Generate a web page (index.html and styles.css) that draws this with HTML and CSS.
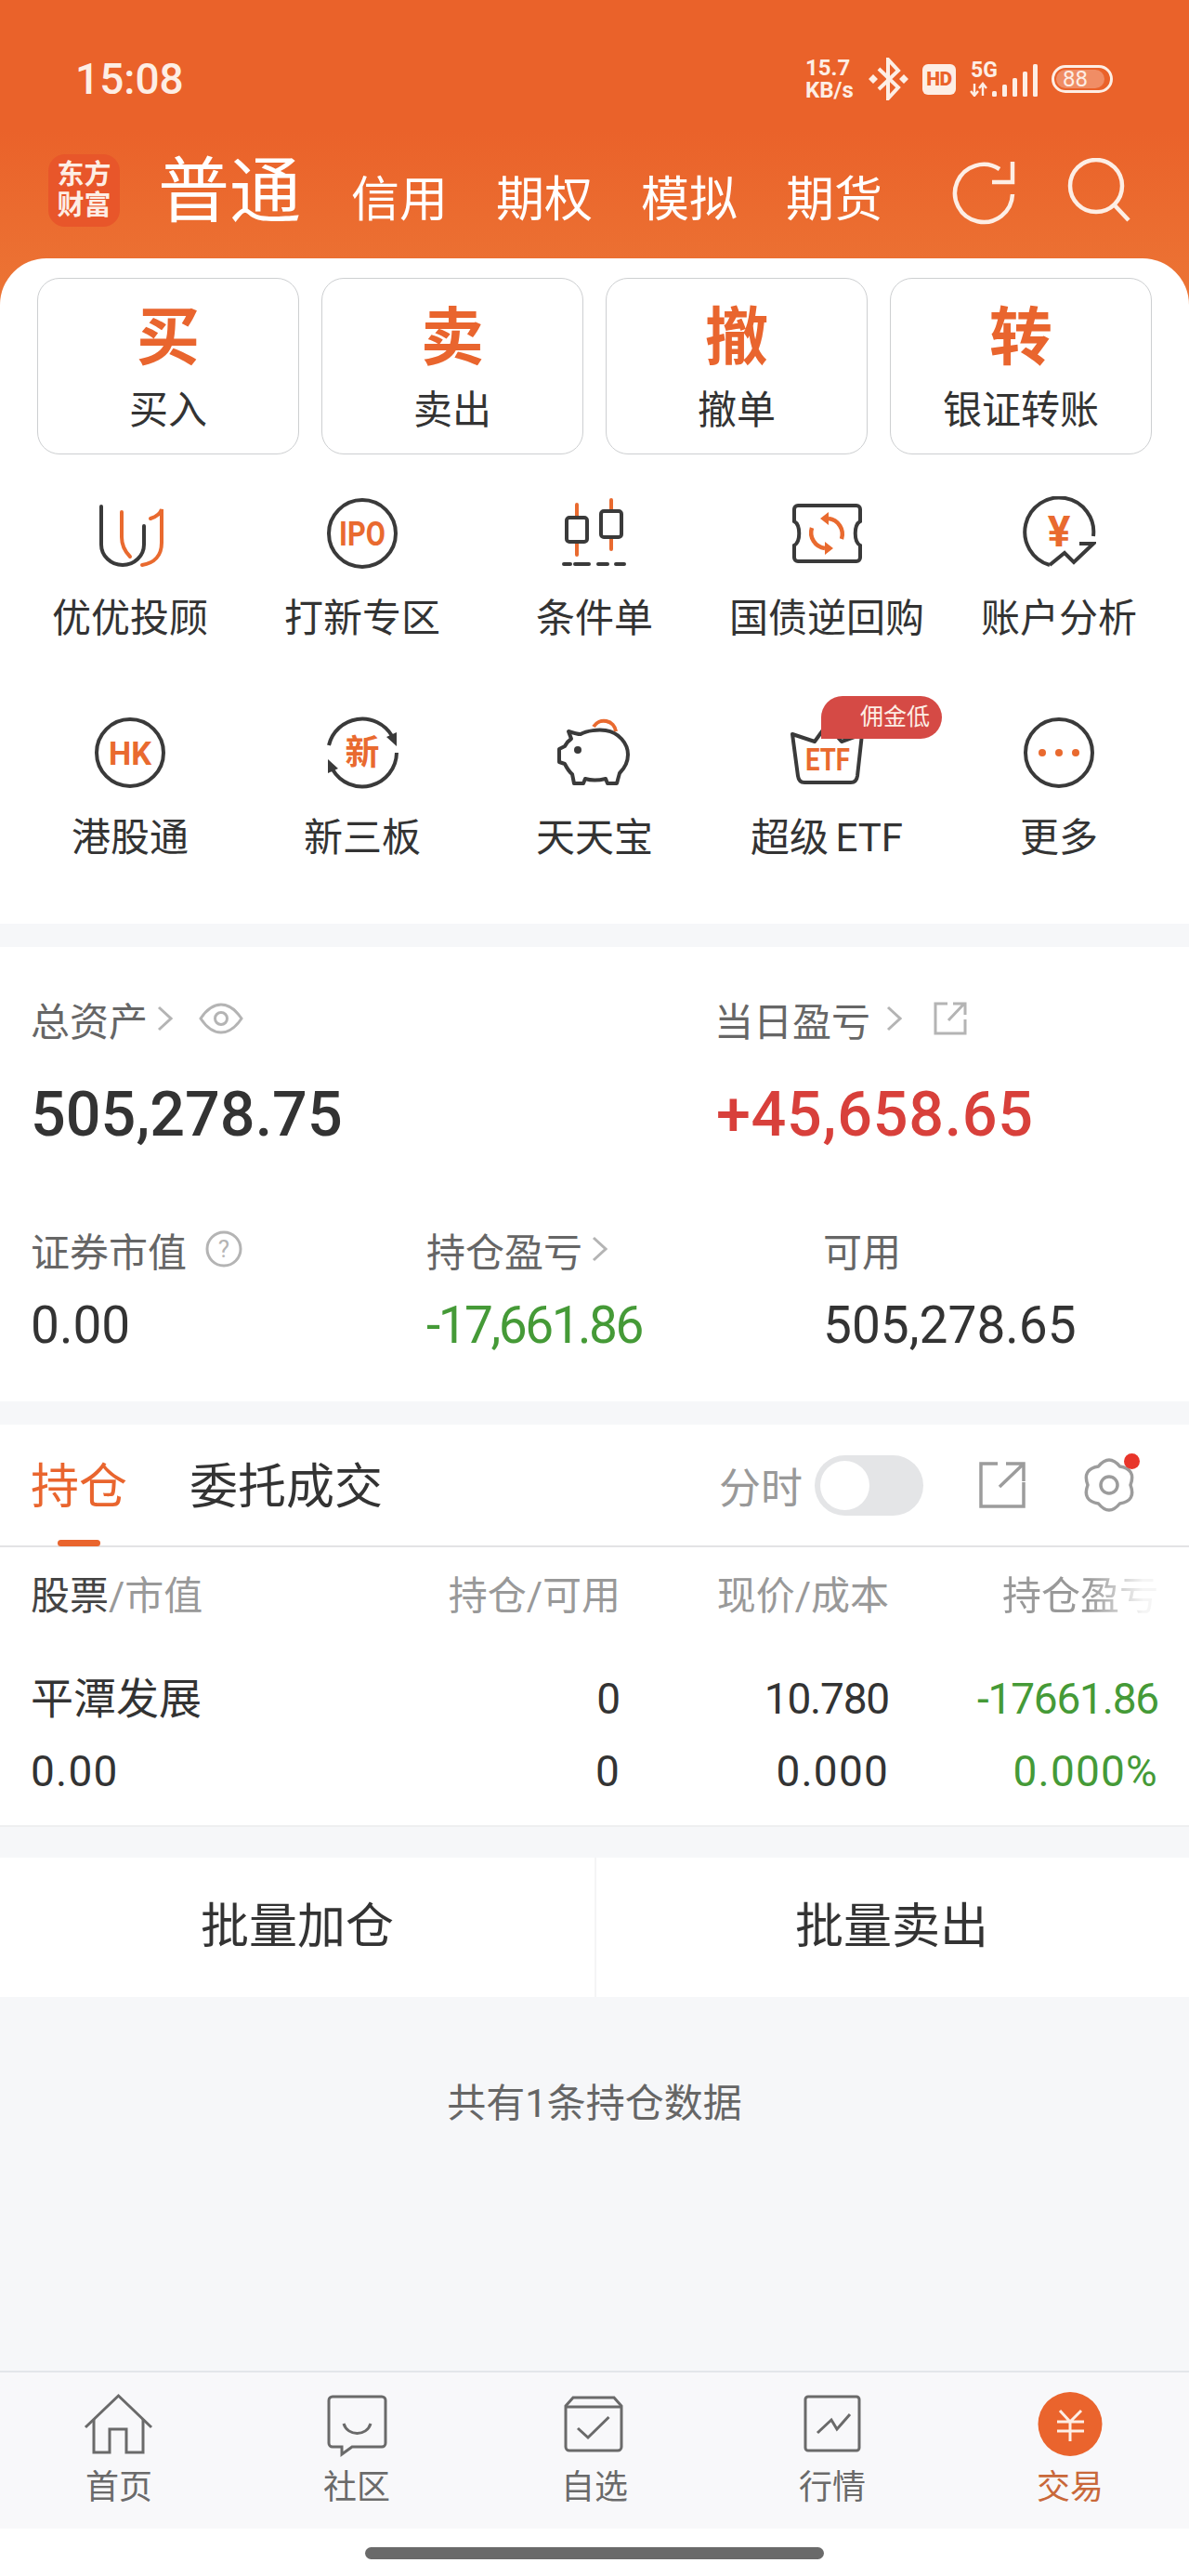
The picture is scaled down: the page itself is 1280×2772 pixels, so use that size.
FILE: index.html
```html
<!DOCTYPE html>
<html lang="zh-CN">
<head>
    <meta charset="UTF-8">
    <title>交易</title>
    <link rel="stylesheet" href="styles.css">
</head>
<body>
    <header class="header">
        <div class="status-bar">
            <span class="time">15:08</span>
            <div class="status-icons">
                <div class="speed"><span>15.7</span><span>KB/s</span></div>
                <svg class="ico-bt" width="43" height="46" viewBox="0 0 43 46"><path d="M11 12L32 32L21 44V2L32 14L11 34" fill="none" stroke="#fdeee5" stroke-width="4"/><path d="M5 18l5 5-5 5-5-5zM38 18l5 5-5 5-5-5z" fill="#fdeee5"/></svg>
                <div class="hd">HD</div>
                <svg class="ico-net" width="74" height="44" viewBox="0 -6 74 44">
                    <text x="1" y="17" class="net-text">5G</text>
                    <path d="M5 37V24M1 32l4 5 4-5M14 24V37M10 29l4-5 4 5" fill="none" stroke="#fdeee5" stroke-width="2.4"/>
                    <rect x="24" y="32" width="5" height="6" rx="1.5" fill="#fdeee5"/>
                    <rect x="35" y="25" width="5" height="13" rx="1.5" fill="#fdeee5"/>
                    <rect x="46" y="18" width="5" height="20" rx="1.5" fill="#fdeee5"/>
                    <rect x="57" y="11" width="5" height="27" rx="1.5" fill="#fdeee5"/>
                    <rect x="68" y="3" width="5" height="35" rx="1.5" fill="#fdeee5"/>
                </svg>
                <div class="battery"><div class="battery-fill"></div><span>88</span></div>
            </div>
        </div>
        <nav class="top-nav">
            <div class="logo"><span>东方</span><span>财富</span></div>
            <a class="nav-main">普通</a>
            <a class="nav-link">信用</a>
            <a class="nav-link">期权</a>
            <a class="nav-link">模拟</a>
            <a class="nav-link">期货</a>
            <svg class="ico-refresh" width="70" height="70" viewBox="0 0 70 70" fill="none" stroke="#fdeee5" stroke-width="4.5"><path d="M52 10A31 31 0 1 0 66 37"/><path d="M66 2V24H44"/></svg>
            <svg class="ico-search" width="70" height="70" viewBox="0 0 70 70" fill="none" stroke="#fdeee5" stroke-width="4.5"><circle cx="32" cy="30" r="28"/><path d="M52 51L67 67"/></svg>
        </nav>
    </header>

    <section class="card menu-card">
        <div class="trade-row">
            <div class="trade-btn"><b>买</b><span>买入</span></div>
            <div class="trade-btn"><b>卖</b><span>卖出</span></div>
            <div class="trade-btn"><b>撤</b><span>撤单</span></div>
            <div class="trade-btn"><b>转</b><span>银证转账</span></div>
        </div>
        <div class="menu-grid">
            <div class="menu-item">
                <svg width="80" height="80" viewBox="0 0 80 80" fill="none" stroke-width="4" stroke-linecap="round"><path d="M9 11V52a23 22 0 0 0 46 0V32" stroke="#3a3a3a"/><path d="M31 17V44c0 9 3 15 9 21" stroke="#e96a2f"/><path d="M62 24C68 22 73 18 74 14V50C74 64 66 72 53 74" stroke="#e96a2f"/></svg>
                <span>优优投顾</span>
            </div>
            <div class="menu-item">
                <svg width="80" height="80" viewBox="0 0 80 80" fill="none"><circle cx="40" cy="40" r="36" stroke="#3a3a3a" stroke-width="4"/><text x="40" y="53" class="ico-text" font-size="36" textLength="50" lengthAdjust="spacingAndGlyphs">IPO</text></svg>
                <span>打新专区</span>
            </div>
            <div class="menu-item">
                <svg width="80" height="80" viewBox="0 0 80 80" fill="none" stroke-width="4" stroke-linecap="round"><path d="M21 9V23M21 49V63M58 4V16M58 44V57" stroke="#e96a2f"/><rect x="10" y="23" width="22" height="26" rx="3" stroke="#3a3a3a"/><rect x="47" y="16" width="22" height="28" rx="3" stroke="#3a3a3a"/><path d="M7 73H14M19 73H34M44 73H54M63 73H72" stroke="#3a3a3a"/></svg>
                <span>条件单</span>
            </div>
            <div class="menu-item">
                <svg width="80" height="80" viewBox="0 0 80 80" fill="none"><path d="M9 10H72a4 4 0 0 1 4 4V27c-7 4-7 22 0 26V66a4 4 0 0 1-4 4H9a4 4 0 0 1-4-4V53c7-4 7-22 0-26V14a4 4 0 0 1 4-4Z" stroke="#3a3a3a" stroke-width="4"/><path d="M56 46A17 17 0 0 0 42 24M24 34A17 17 0 0 0 38 56" stroke="#e96a2f" stroke-width="4.5"/><path d="M42 17L33 24L42 31ZM38 49L47 56L38 63Z" fill="#e96a2f"/></svg>
                <span>国债逆回购</span>
            </div>
            <div class="menu-item">
                <svg width="80" height="80" viewBox="0 0 80 80" fill="none"><path d="M30 74A37 37 0 1 1 77 43" stroke="#3a3a3a" stroke-width="4"/><path d="M30 74L46 61L56 71L77 51H62" stroke="#3a3a3a" stroke-width="4"/><text x="40" y="54" class="ico-text" font-size="46">¥</text></svg>
                <span>账户分析</span>
            </div>
            <div class="menu-item">
                <svg width="80" height="80" viewBox="0 0 80 80" fill="none"><circle cx="40" cy="40" r="36" stroke="#3a3a3a" stroke-width="4"/><text x="40" y="53" class="ico-text" font-size="35" textLength="46" lengthAdjust="spacingAndGlyphs">HK</text></svg>
                <span>港股通</span>
            </div>
            <div class="menu-item">
                <svg width="80" height="80" viewBox="0 0 80 80" fill="none"><path d="M4 32A37 37 0 0 1 72 22M77 40A37 37 0 0 1 8 58" stroke="#3a3a3a" stroke-width="4"/><path d="M66 23L77 18L77 33ZM14 57L3 62L3 47Z" fill="#3a3a3a"/><text x="40" y="53" class="ico-text" font-size="37">新</text></svg>
                <span>新三板</span>
            </div>
            <div class="menu-item">
                <svg width="80" height="80" viewBox="0 0 80 80" fill="none"><path d="M12 17C18 19 22 20 25 20C32 16 44 15 52 16C66 18 76 30 76 42C76 52 71 58 67 62L64 73H54L52 68C44 70 36 70 30 68L28 73H18L16 63C12 60 10 56 8 52L2 50L2 36L8 33C10 29 12 27 15 25Z" stroke="#3a3a3a" stroke-width="4" stroke-linejoin="round"/><circle cx="22" cy="37" r="4" fill="#3a3a3a"/><path d="M39 12A13 13 0 0 1 63 17" stroke="#e96a2f" stroke-width="4"/></svg>
                <span>天天宝</span>
            </div>
            <div class="menu-item">
                <svg width="80" height="80" viewBox="0 0 80 80" fill="none"><path d="M3 20L27 28L40 10L56 28L78 20L73 65Q72 72 66 72H16Q10 72 9 65Z" stroke="#3a3a3a" stroke-width="4" stroke-linejoin="round"/><text x="41" y="59" class="ico-text" font-size="33" textLength="48" lengthAdjust="spacingAndGlyphs">ETF</text></svg>
                <span class="etf-label">超级 ETF</span>
                <div class="badge">佣金低</div>
            </div>
            <div class="menu-item">
                <svg width="80" height="80" viewBox="0 0 80 80" fill="none"><circle cx="40" cy="40" r="36" stroke="#3a3a3a" stroke-width="4"/><circle cx="22" cy="40" r="4" fill="#e96a2f"/><circle cx="40" cy="40" r="4" fill="#e96a2f"/><circle cx="58" cy="40" r="4" fill="#e96a2f"/></svg>
                <span>更多</span>
            </div>
        </div>
    </section>

    <section class="card assets">
        <div class="assets-top">
            <div>
                <div class="asset-label">总资产<svg class="chev" width="17" height="28" viewBox="0 0 17 28" fill="none"><path d="M2 2L15 14L2 26"/></svg>
                    <svg class="ico-eye" width="48" height="34" viewBox="0 0 48 34" fill="none" stroke="#b4b4b4" stroke-width="3"><path d="M2 17C10 5 18 2 24 2S38 5 46 17C38 29 30 32 24 32S10 29 2 17Z"/><circle cx="24" cy="17" r="6.5"/></svg>
                </div>
                <div class="asset-big">505,278.75</div>
            </div>
            <div>
                <div class="asset-label">当日盈亏<svg class="chev chev-wide" width="17" height="28" viewBox="0 0 17 28" fill="none"><path d="M2 2L15 14L2 26"/></svg>
                    <svg class="ico-ext" width="38" height="38" viewBox="0 0 38 38" fill="none" stroke="#b4b4b4" stroke-width="3"><path d="M16 3H3V35H35V20"/><path d="M17 21L34 3M22 3H35V15"/></svg>
                </div>
                <div class="asset-big up">+45,658.65</div>
            </div>
        </div>
        <div class="assets-bottom">
            <div>
                <div class="asset-label">证券市值<svg class="ico-help" width="40" height="42" viewBox="0 0 40 42" fill="none"><circle cx="20" cy="21" r="18" stroke="#b4b4b4" stroke-width="3"/><text x="20" y="30" class="help-text">?</text></svg></div>
                <div class="asset-val">0.00</div>
            </div>
            <div>
                <div class="asset-label">持仓盈亏<svg class="chev" width="17" height="28" viewBox="0 0 17 28" fill="none"><path d="M2 2L15 14L2 26"/></svg></div>
                <div class="asset-val down tight">-17,661.86</div>
            </div>
            <div>
                <div class="asset-label">可用</div>
                <div class="asset-val">505,278.65</div>
            </div>
        </div>
    </section>

    <section class="card positions">
        <div class="tabs">
            <a class="tab active">持仓</a>
            <a class="tab">委托成交</a>
            <span class="tab-spacer"></span>
            <span class="fenshi">分时</span>
            <div class="toggle"><div class="knob"></div></div>
            <svg class="ico-share" width="50" height="50" viewBox="0 0 50 50" fill="none" stroke="#9c9c9c" stroke-width="3.5"><path d="M20 2H2V48H48V22"/><path d="M22 27L47 3M29 2H48V21"/></svg>
            <div class="gear">
                <svg width="60" height="60" viewBox="0 0 60 60" fill="none" stroke="#9c9c9c" stroke-width="3.5" stroke-linejoin="round"><path d="M18.500 10Q30 -4 41.500 10Q59.400 13 53 30Q59.400 47 41.500 50Q30 64 18.500 50Q0.600 47 7 30Q0.600 13 18.500 10Z"/><circle cx="30" cy="30" r="9"/></svg>
                <i class="gear-dot"></i>
            </div>
        </div>
        <div class="table-head">
            <div><span class="dark">股票</span>/市值</div>
            <div>持仓/可用</div>
            <div>现价/成本</div>
            <div><span class="fade">持仓盈亏</span></div>
        </div>
        <div class="table-row">
            <div class="stock-name">平潭发展</div>
            <div>0</div>
            <div class="row-tight">10.780</div>
            <div class="down row-tight">-17661.86</div>
        </div>
        <div class="table-row second">
            <div>0.00</div>
            <div>0</div>
            <div>0.000</div>
            <div class="down">0.000%</div>
        </div>
    </section>

    <section class="card batch">
        <a>批量加仓</a>
        <a>批量卖出</a>
    </section>

    <div class="count-msg">共有1条持仓数据</div>

    <footer class="tabbar">
        <div class="tab-item">
            <svg width="80" height="72" viewBox="0 0 80 72" fill="none" stroke="#6a6a6a" stroke-width="3"><path d="M4 39L39.500 5L75 39"/><path d="M13 30V66H30V41H48V66H66V30"/></svg>
            <span>首页</span>
        </div>
        <div class="tab-item">
            <svg width="80" height="72" viewBox="0 0 80 72" fill="none" stroke="#6a6a6a" stroke-width="3"><path d="M14 6H67a4 4 0 0 1 4 4V56a4 4 0 0 1-4 4H35L24 68V60H14a4 4 0 0 1-4-4V10a4 4 0 0 1 4-4Z"/><path d="M26 35c4 14 25 14 29 0"/></svg>
            <span>社区</span>
        </div>
        <div class="tab-item">
            <svg width="80" height="72" viewBox="0 0 80 72" fill="none" stroke="#6a6a6a" stroke-width="3"><path d="M9 16L17 7H61L69 16V60a4 4 0 0 1-4 4H13a4 4 0 0 1-4-4Z"/><path d="M9 17H69M22 40L33 50L55.500 28"/></svg>
            <span>自选</span>
        </div>
        <div class="tab-item">
            <svg width="80" height="72" viewBox="0 0 80 72" fill="none" stroke="#6a6a6a" stroke-width="3"><rect x="11" y="6" width="58" height="58" rx="3"/><path d="M24 45L39 31L45 41L59 25"/></svg>
            <span>行情</span>
        </div>
        <div class="tab-item active">
            <svg width="80" height="72" viewBox="0 0 80 72" fill="none"><circle cx="40" cy="35.500" r="34.500" fill="#ea642d"/><path d="M29 21L40 33L52 21M26 33H55M26 43H55M40 33V54" stroke="#fdeee5" stroke-width="3"/></svg>
            <span>交易</span>
        </div>
    </footer>
    <div class="home-area"><div class="home-bar"></div></div>
</body>
</html>
```

FILE: styles.css
```css
body {
    margin: 0;
    width: 1280px;
    height: 2772px;
    overflow: hidden;
    background: #f6f7f9;
    color: #333;
    font-family: Roboto, "Noto Sans CJK SC", sans-serif;
}
svg {
    display: block;
    flex: none;
}
.header {
    height: 328px;
    background: linear-gradient(#ea622a 0, #ea622a 140px, #ec7535 328px);
    color: #fff;
}
.status-bar {
    height: 135px;
    padding: 35px 82px 0 81px;
    box-sizing: border-box;
    display: flex;
    align-items: center;
    justify-content: space-between;
    color: #fdeee5;
}
.time {
    font-size: 46px;
    font-weight: 500;
    line-height: 100px;
}
.status-icons {
    display: flex;
    align-items: center;
}
.speed {
    display: flex;
    flex-direction: column;
    font-size: 24px;
    font-weight: 700;
    line-height: 24px;
    width: 56px;
    margin-right: 12px;
}
.ico-bt {
    margin-right: 15px;
}
.hd {
    width: 36px;
    height: 33px;
    margin-right: 15px;
    border-radius: 6px;
    background: #fdeee5;
    color: #ea622a;
    font-size: 21px;
    font-weight: 900;
    line-height: 33px;
    text-align: center;
    letter-spacing: -0.5px;
}
.net-text {
    font-family: Roboto, sans-serif;
    font-size: 23px;
    font-weight: 700;
    fill: #fdeee5;
}
.ico-net {
    margin-right: 14px;
    margin-bottom: 6px;
}
.battery {
    width: 66px;
    height: 30px;
    box-sizing: border-box;
    border: 3px solid #fdeee5;
    border-radius: 15px;
    display: flex;
    align-items: center;
    position: relative;
    overflow: hidden;
}
.battery-fill {
    width: 52px;
    height: 20px;
    margin-left: 2px;
    border-radius: 10px;
    background: rgba(255, 255, 255, 0.28);
}
.battery span {
    position: absolute;
    left: 9px;
    top: 0;
    font-size: 24px;
    line-height: 24px;
}
.top-nav {
    height: 90px;
    margin-top: 25px;
    padding-left: 52px;
    display: flex;
    align-items: flex-end;
    position: relative;
}
.logo {
    width: 77px;
    height: 78px;
    margin-bottom: 6px;
    border-radius: 18px;
    background: #e8562a;
    display: flex;
    flex-direction: column;
    align-items: center;
    justify-content: center;
    font-size: 29px;
    font-weight: 700;
    line-height: 33px;
    color: #fdeee5;
}
.nav-main {
    margin-left: 41px;
    margin-right: 2px;
    font-size: 77px;
    line-height: 86px;
    white-space: nowrap;
}
.nav-link {
    margin-left: 52px;
    font-size: 52px;
    line-height: 60px;
    margin-bottom: 4px;
    width: 104px;
    white-space: nowrap;
}
.ico-refresh {
    margin-left: 74px;
    margin-bottom: 8px;
}
.ico-search {
    margin-left: 54px;
    margin-bottom: 10px;
}
.card {
    background: #fff;
}
.menu-card {
    margin-top: -50px;
    height: 716px;
    box-sizing: border-box;
    padding-top: 21px;
    border-radius: 50px 50px 0 0;
    position: relative;
}
.trade-row {
    display: grid;
    grid-template-columns: repeat(4, 282px);
    gap: 24px;
    padding: 0 40px;
}
.trade-btn {
    height: 190px;
    box-sizing: border-box;
    border: 1.5px solid #cdcfd1;
    border-radius: 24px;
    display: flex;
    flex-direction: column;
    align-items: center;
    padding-top: 29px;
}
.trade-btn b {
    font-size: 68px;
    line-height: 70px;
    font-weight: 700;
    color: #e9652e;
}
.trade-btn span {
    margin-top: 18px;
    font-size: 42px;
    line-height: 50px;
}
.menu-grid {
    margin-top: 45px;
    padding: 0 15px;
    display: grid;
    grid-template-columns: repeat(5, 250px);
    grid-auto-rows: 157px;
    row-gap: 79px;
}
.menu-item {
    display: flex;
    flex-direction: column;
    align-items: center;
    position: relative;
    font-size: 42px;
    line-height: 50px;
}
.menu-item span {
    margin-top: 27px;
    white-space: nowrap;
}
.menu-item .etf-label {
    word-spacing: -3px;
}
.ico-text {
    font-family: Roboto, "Noto Sans CJK SC", sans-serif;
    font-weight: 700;
    fill: #e96a2f;
    text-anchor: middle;
}
.badge {
    position: absolute;
    top: -21px;
    right: 1px;
    width: 130px;
    height: 46px;
    box-sizing: border-box;
    padding-right: 13px;
    border-radius: 23px 23px 23px 0;
    background: #d54a45;
    color: #fdeee5;
    font-size: 25px;
    line-height: 46px;
    text-align: right;
}
.assets {
    margin-top: 25px;
    height: 489px;
    box-sizing: border-box;
    padding: 52px 0 0 33px;
}
.assets-top {
    display: grid;
    grid-template-columns: 736px 1fr;
}
.assets-bottom {
    margin-top: 80px;
    display: grid;
    grid-template-columns: 426px 427px 1fr;
}
.asset-label {
    display: flex;
    align-items: center;
    height: 50px;
    font-size: 42px;
    color: #666;
}
.chev {
    margin-left: 10px;
}
.chev-wide {
    margin-left: 17px;
}
.chev path {
    stroke: #b4b4b4;
    stroke-width: 3;
}
.ico-eye {
    margin-left: 28px;
}
.ico-ext {
    margin-left: 33px;
}
.ico-help {
    margin-left: 20px;
}
.help-text {
    font-family: Roboto, sans-serif;
    font-size: 26px;
    fill: #b4b4b4;
    text-anchor: middle;
}
.asset-big {
    margin-top: 38px;
    font-size: 66.5px;
    font-weight: 500;
    line-height: 80px;
}
.asset-big.up {
    letter-spacing: 0.7px;
    padding-left: 2px;
}
.asset-val {
    margin-top: 27px;
    font-size: 55px;
    line-height: 60px;
}
.asset-val.tight {
    letter-spacing: -2.5px;
}
.up {
    color: #d8403b;
}
.down {
    color: #459a37;
}
.positions {
    margin-top: 25px;
    height: 431px;
    border-bottom: 2px solid #eeeff0;
}
.tabs {
    height: 132px;
    box-sizing: border-box;
    border-bottom: 2px solid #e3e3e5;
    padding: 0 54px 0 33px;
    display: flex;
    align-items: center;
}
.tab {
    font-size: 52px;
    line-height: 124px;
    padding-top: 6px;
    margin-right: 67px;
    position: relative;
}
.tab.active {
    color: #e9652e;
}
.tab.active::after {
    content: "";
    position: absolute;
    left: 29px;
    bottom: -1px;
    width: 46px;
    height: 7px;
    border-radius: 4px;
    background: #e9652e;
}
.tab-spacer {
    flex: 1;
}
.fenshi {
    font-size: 45px;
    color: #999;
    margin-right: 13px;
}
.toggle {
    width: 117px;
    height: 65px;
    border-radius: 33px;
    background: #e4e5e7;
    padding: 6px;
    box-sizing: border-box;
    margin-right: 60px;
}
.knob {
    width: 53px;
    height: 53px;
    border-radius: 50%;
    background: #fff;
}
.ico-share {
    margin-right: 60px;
}
.gear {
    position: relative;
    margin-right: 2px;
}
.gear-dot {
    position: absolute;
    top: -4px;
    right: -3px;
    width: 17px;
    height: 17px;
    border-radius: 50%;
    background: #e8352a;
}
.table-head, .table-row {
    display: grid;
    grid-template-columns: 335px 300px 289px 290px;
    padding-left: 33px;
    line-height: 50px;
    text-align: right;
}
.table-head > div:first-child, .table-row > div:first-child {
    text-align: left;
}
.table-head {
    margin-top: 28px;
    font-size: 42px;
    color: #999;
}
.table-head .dark {
    color: #444;
}
.fade {
    display: inline-block;
    -webkit-mask-image: linear-gradient(to right, #000 55%, rgba(0, 0, 0, 0.1) 90%);
    mask-image: linear-gradient(to right, #000 55%, rgba(0, 0, 0, 0.1) 90%);
}
.table-row {
    margin-top: 60px;
    font-size: 46px;
}
.table-row.second {
    margin-top: 28px;
    letter-spacing: 1.2px;
}
.row-tight {
    letter-spacing: -1.2px;
}
.batch {
    margin-top: 33px;
    height: 150px;
    display: grid;
    grid-template-columns: 1fr 1fr;
    font-size: 52px;
    line-height: 150px;
    text-align: center;
    position: relative;
}
.batch a + a {
    box-shadow: inset 2px 0 0 #f4f4f5;
}
.count-msg {
    height: 402px;
    box-sizing: border-box;
    padding-top: 90px;
    font-size: 42px;
    line-height: 50px;
    text-align: center;
    color: #666;
}
.tabbar {
    height: 170px;
    box-sizing: border-box;
    border-top: 2px solid #e4e6ea;
    background: #f8f8fa;
    padding-top: 20px;
    display: grid;
    grid-template-columns: repeat(5, 1fr);
}
.tab-item {
    display: flex;
    flex-direction: column;
    align-items: center;
    font-size: 36px;
    line-height: 40px;
    color: #6a6a6a;
}
.tab-item span {
    margin-top: 12px;
}
.tab-item.active {
    color: #c9683a;
}
.home-area {
    height: 52px;
    background: #fff;
    display: flex;
    justify-content: center;
    padding-top: 20px;
    box-sizing: border-box;
}
.home-bar {
    width: 494px;
    height: 13px;
    border-radius: 7px;
    background: #6a6a6a;
}
```
